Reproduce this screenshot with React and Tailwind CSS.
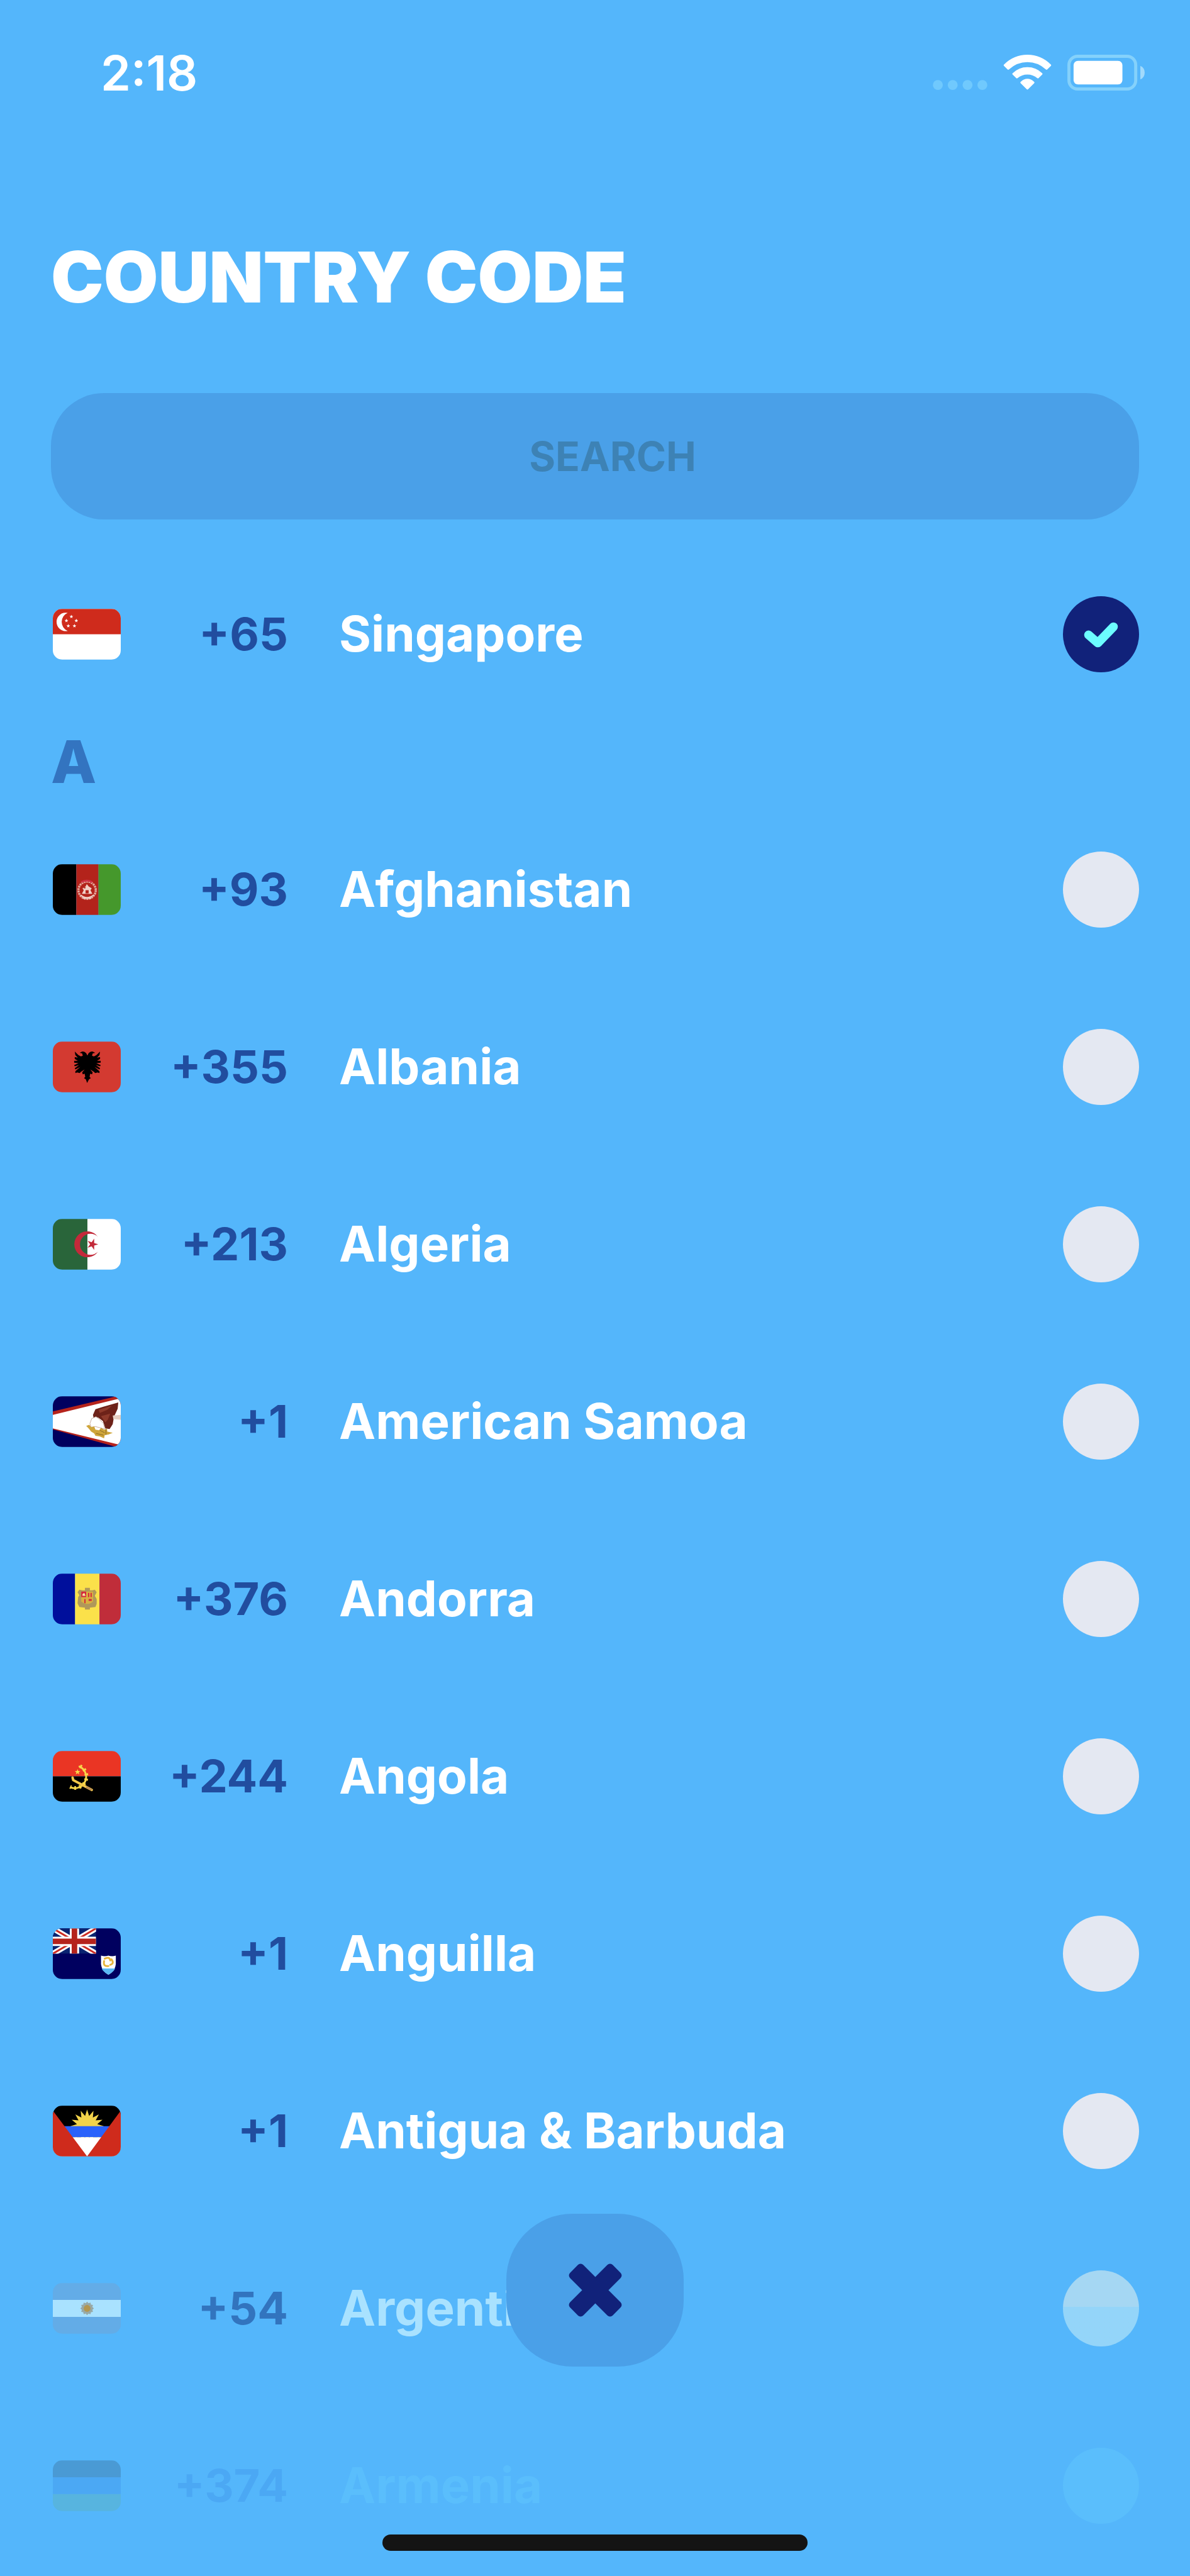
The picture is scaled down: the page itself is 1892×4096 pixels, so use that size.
import React, { useState } from "react";

const starPoints = (cx, cy, r, inner = 0.42, spikes = 5, turn = -90) =>
  Array.from({ length: spikes * 2 }, (_, i) => {
    const radius = i % 2 ? r * inner : r;
    const a = ((turn + (i * 180) / spikes) * Math.PI) / 180;
    return `${(cx + radius * Math.cos(a)).toFixed(2)},${(cy + radius * Math.sin(a)).toFixed(2)}`;
  }).join(" ");

const Star = ({ cx, cy, r, inner, spikes, turn, fill }) => (
  <polygon points={starPoints(cx, cy, r, inner, spikes, turn)} fill={fill} />
);

// All flags share a 110 x 82 canvas
const flags = {
  sg: (
    <>
      <path fill="#fff" d="M0 0h110v82H0z" />
      <path fill="#cf2b1c" d="M0 0h110v41H0z" />
      <path fill="#fff" d="M24 6.300A15 15 0 1 0 24 35.700A16 16 0 0 1 24 6.300z" />
      <Star cx={30} cy={12.5} r={3.2} fill="#fff" />
      <Star cx={22} cy={19} r={3.2} fill="#fff" />
      <Star cx={38} cy={19} r={3.2} fill="#fff" />
      <Star cx={25} cy={27.5} r={3.2} fill="#fff" />
      <Star cx={35} cy={27.5} r={3.2} fill="#fff" />
    </>
  ),
  af: (
    <>
      <path fill="#000" d="M0 0h38v82H0z" />
      <path fill="#b3231b" d="M38 0h36v82H38z" />
      <path fill="#45982c" d="M74 0h36v82H74z" />
      <circle cx="55.500" cy="42" r="14" fill="none" stroke="#e3a79c" strokeWidth="3.500" strokeDasharray="3 1" />
      <path d="M46 29q9-5 18 0" stroke="#cf3246" strokeWidth="3" fill="none" />
      <path fill="#f0cfc6" d="M55 32l3 4 5 3-2 3 3 6H47l3-6-2-3 5-3z" />
      <path fill="#b3231b" d="M53 42h5v5h-5zM50 37h3v2h-3z" />
      <path d="M45 50q10 8 21 0M49 55h13" stroke="#f0cfc6" strokeWidth="2" fill="none" />
    </>
  ),
  al: (
    <>
      <path fill="#d33a31" d="M0 0h110v82H0z" />
      <path
        fill="#000"
        d="M55.500 22c-1-4-4-6-8-6l-4 2 4 1 1 4-3 1-4-2-6-6 1 6 4 4-5-1v3l5 3h-6v3l7 1-7 3 1 2 7-2-7 5 1 2 8-4-8 7v3l3-1 4 1 2-2 6-4-4 5 1 3 3-1 1 5-2 2 3 2 2 6 3-6 3-2-2-2 1-5 3 1 1-3-4-5 6 4 2 2 4-1 3 1v-3l-8-7 8 4 1-2-7-5 7 2 1-2-7-3 7-1v-3h-6l5-3v-3l-5 1 4-4 1-6-6 6-4 2-3-1 1-4 4-1-4-2c-4 0-7 2-8 6z"
      />
    </>
  ),
  dz: (
    <>
      <path fill="#29653a" d="M0 0h56v82H0z" />
      <path fill="#fff" d="M56 0h54v82H56z" />
      <path fill="#c32a3a" d="M73 29A21 21 0 1 0 73 53A17 17 0 1 1 73 29z" />
      <Star cx={64} cy={41} r={9.5} inner={0.38} turn={-72} fill="#c32a3a" />
    </>
  ),
  as: (
    <>
      <path fill="#00005f" d="M0 0h110v82H0z" />
      <path fill="#b5231c" d="M0 24.500L103 0h7v82h-7L0 53.500z" />
      <path fill="#fff" d="M0 30L110 3v76L0 52z" />
      <path fill="#6d2219" d="M65 30l4-9 12-4 25-7-1 10-6 13-2 12-5 8-7-1-4-12-8-6-7 1z" />
      <path fill="#8f3a2b" d="M74 22l22-7-8 7-12 5zM78 32l15-4-4 10-4 4z" />
      <path fill="#e6cfc2" d="M97 31l13-1v8l-12-1z" />
      <path fill="#fff" stroke="#c9ab9d" strokeWidth="1" d="M60 44l3-8 7-3 5 4 7 7 2 9-7-2-8-2-7 1z" />
      <path
        fill="#cfa53a"
        d="M54 48l5-2 3 4 5-1 2 5 6 1 3-4 5 3 5-1v4l9 2-7 3-6 1-1 5-7-3-7-1-2-4-5-3-4-5z"
      />
      <path stroke="#8a6a24" strokeWidth="1" fill="none" d="M70 60l12 3M76 55l8 4M86 52v10" />
    </>
  ),
  ad: (
    <>
      <path fill="#000f9c" d="M0 0h36v82H0z" />
      <path fill="#fbe14a" d="M36 0h39.500v82H36z" />
      <path fill="#c02d3a" d="M75.500 0H110v82H75.500z" />
      <path
        fill="#b0985a"
        d="M52 23h8v4h4l4-1 3 4-3 6 3 5v8l-2 5-9 1v3h-8v-3l-9-1-3-6 1-10 2-3-3-5 3-4 5 1 4 0z"
      />
      <path fill="#d9b040" d="M46 29h19v16q-9 8-19 0z" />
      <path fill="#d5283c" d="M46 29h8v9h-8zM57 31h2v7h-2zM61 31h2v7h-2zM51 41h2v7h-2zM58 41h5v3h-5z" />
      <path fill="#f7e6a0" d="M48 33l3-2 2 5h-5z" />
    </>
  ),
  ao: (
    <>
      <path fill="#ea3524" d="M0 0h110v41H0z" />
      <path fill="#000" d="M0 41h110v41H0z" />
      <path d="M42 24.500A18 18 0 0 1 29 59" stroke="#f8d84a" strokeWidth="3" fill="none" />
      <path
        d="M44 24.500A18 18 0 0 1 28 58"
        stroke="#f8d84a"
        strokeWidth="6"
        strokeDasharray="3 5"
        fill="none"
      />
      <path d="M32 43l1 4 30 16" stroke="#f3c94a" strokeWidth="4" fill="none" strokeLinecap="round" />
      <path d="M54 58l9 5" stroke="#b98a55" strokeWidth="3" />
      <Star cx={40} cy={34} r={4.8} fill="#f8d84a" />
    </>
  ),
  ai: (
    <>
      <path fill="#00005f" d="M0 0h110v82H0z" />
      <svg width="70" height="41" viewBox="0 0 70 41">
        <path fill="#0a2370" d="M0 0h70v41H0z" />
        <path stroke="#fff" strokeWidth="9" d="M0 0l70 41M70 0L0 41" />
        <path stroke="#cc2b22" strokeWidth="3" d="M0 0l70 41M70 0L0 41" />
        <path stroke="#fff" strokeWidth="15" d="M35 0v41M0 21h70" />
        <path stroke="#b5231c" strokeWidth="9" d="M35 0v41M0 21h70" />
      </svg>
      <path fill="#fff" d="M78 44q6 2 12 0 6 2 12 0v14q-1 11-12 17-11-6-12-17z" />
      <path fill="#5bb8f5" d="M79 65h22q-3 6-11 10-8-4-11-10z" />
      <path
        d="M84 49q8-4 9 3M95 50q5 7-2 9M90 61q-9 1-7-8"
        stroke="#e8b53c"
        strokeWidth="3"
        fill="none"
        strokeLinecap="round"
      />
    </>
  ),
  ag: (
    <>
      <path fill="#000" d="M0 0h110v82H0z" />
      <Star cx={55.5} cy={33} r={27} inner={0.62} spikes={16} turn={-90} fill="#f2d34a" />
      <path fill="#2a62fb" d="M0 33h110v18H0z" />
      <path fill="#fff" d="M0 51h110v31H0z" />
      <path fill="#cf2b1c" d="M0 8l55.500 74H0zM110 8L55.500 82H110z" />
    </>
  ),
  ar: (
    <>
      <path fill="#63ace7" d="M0 0h110v82H0z" />
      <path fill="#a9e2ff" d="M0 27.300h110v27.400H0z" />
      <Star cx={55.5} cy={41} r={11} inner={0.8} spikes={12} fill="#98a9a6" />
      <circle cx="55.500" cy="41" r="5.500" fill="#b3964f" />
    </>
  ),
  am: (
    <>
      <path fill="#4a9ad4" d="M0 0h110v27.500H0z" />
      <path fill="#4ba8f4" d="M0 27.300h110v27.500H0z" />
      <path fill="#57b4df" d="M0 54.600h110V82H0z" />
    </>
  ),
};

const countries = [
  { id: "af", code: "+93", name: "Afghanistan" },
  { id: "al", code: "+355", name: "Albania" },
  { id: "dz", code: "+213", name: "Algeria" },
  { id: "as", code: "+1", name: "American Samoa" },
  { id: "ad", code: "+376", name: "Andorra" },
  { id: "ao", code: "+244", name: "Angola" },
  { id: "ai", code: "+1", name: "Anguilla" },
  { id: "ag", code: "+1", name: "Antigua & Barbuda" },
  { id: "ar", code: "+54", name: "Argentina", tone: "fading" },
  { id: "am", code: "+374", name: "Armenia", tone: "faded" },
];

const tones = {
  solid: { code: "text-[#214d9f]", name: "text-white", radio: "bg-[#e4e8f2]" },
  fading: {
    code: "text-[#3274be]",
    name: "text-[#a9e2ff]",
    radio: "bg-linear-to-b from-[#a5d7f3] from-48% to-[#94d5f9] to-48%",
  },
  faded: { code: "text-[#4ba8f4]", name: "text-[#5abefc]", radio: "bg-[#5abefc]" },
};

const Flag = ({ id }) => (
  <svg viewBox="0 0 110 82" className="w-[108px] h-[81px] rounded-[15px] shrink-0" aria-hidden="true">
    {flags[id]}
  </svg>
);

const CountryRow = ({ country, selected, onSelect }) => {
  const tone = tones[country.tone || "solid"];

  return (
    <label className="flex items-center h-[282px] pl-[3px] cursor-pointer">
      <Flag id={country.id} />
      <span className={`w-[266px] text-right text-[72px] leading-none font-bold ${tone.code}`}>
        {country.code}
      </span>
      <span className={`flex-1 pl-[81px] text-[78px] leading-none font-bold whitespace-nowrap ${tone.name}`}>
        {country.name}
      </span>
      <span className="relative size-[121px] shrink-0">
        <input
          type="radio"
          name="country"
          value={country.id}
          checked={selected}
          onChange={() => onSelect(country.id)}
          className={`block appearance-none size-[121px] rounded-full checked:bg-[#11227a] ${tone.radio}`}
        />
        {selected && (
          <svg viewBox="0 0 122 122" className="absolute inset-0 size-full pointer-events-none" aria-hidden="true">
            <path
              d="M41 62l15 13 25-26"
              fill="none"
              stroke="#6cfdff"
              strokeWidth="14"
              strokeLinecap="round"
              strokeLinejoin="round"
            />
          </svg>
        )}
      </span>
    </label>
  );
};

const StatusBar = () => (
  <div className="flex items-center justify-between h-[232px] pl-[160px] pr-[72px]">
    <span className="text-[77px] leading-none font-semibold text-white">2:18</span>
    <div className="flex items-center gap-[25px]">
      {/* No signal */}
      <svg viewBox="0 0 88 59" className="w-[87px] h-[58px]" fill="#70c9fd">
        <circle cx="8" cy="49" r="8" />
        <circle cx="32" cy="49" r="8" />
        <circle cx="56" cy="49" r="8" />
        <circle cx="80" cy="49" r="8" />
      </svg>
      {/* Wi-Fi */}
      <svg viewBox="0 0 78 59" className="w-[77px] h-[58px]" fill="#fff">
        <path d="M1 16Q17 0 39 0t38 16q1 1 0 2l-6 6q-1 1-2 0Q56 12 39 12T9 24q-1 1-2 0l-6-6q-1-1 0-2z" />
        <path d="M15 30q10-10 24-10t24 10q1 1 0 2l-6 6q-1 1-2 0-7-6-16-6t-16 6q-1 1-2 0l-6-6q-1-1 0-2z" />
        <path d="M28 44q5-5 11-5t11 5q1 1 0 2L40 56q-1 1-2 0L28 46q-1-1 0-2z" />
      </svg>
      {/* Battery */}
      <svg viewBox="0 0 125 59" className="w-[123px] h-[58px]">
        <rect x="2.500" y="2.500" width="108" height="53" rx="14" fill="none" stroke="#84d1fb" strokeWidth="5" />
        <rect x="10" y="10" width="79" height="38" rx="7" fill="#fff" />
        <path d="M118 18q7 3 7 11t-7 11z" fill="#a2dafb" />
      </svg>
    </div>
  </div>
);

export default function App() {
  const [selected, setSelected] = useState("sg");

  return (
    <div className="relative min-h-screen overflow-hidden bg-[#54b6fb] font-[Inter,'Liberation_Sans',sans-serif]">
      <StatusBar />

      <main className="px-[81px]">
        <h1 className="pt-[138px] text-[112px] leading-[140px] font-black text-white whitespace-nowrap">
          COUNTRY CODE
        </h1>

        <input
          type="text"
          aria-label="Search countries"
          placeholder="SEARCH"
          className="block w-full h-[201px] mt-[115px] pl-[56px] rounded-[84px] bg-[#4aa0e8] text-center text-[64px] font-bold text-white outline-none placeholder:text-[#3d82b5] placeholder:opacity-100"
        />

        <div className="mt-[41px]">
          <CountryRow
            country={{ id: "sg", code: "+65", name: "Singapore" }}
            selected={selected === "sg"}
            onSelect={setSelected}
          />

          <h2 className="h-[124px] text-[94px] leading-[124px] font-extrabold text-[#3374c0]">A</h2>

          {countries.map((country) => (
            <CountryRow
              key={country.id}
              country={country}
              selected={selected === country.id}
              onSelect={setSelected}
            />
          ))}
        </div>
      </main>

      {/* Floating close button */}
      <button
        type="button"
        aria-label="Close"
        className="absolute bottom-[333px] left-1/2 -translate-x-1/2 flex items-center justify-center w-[282px] h-[243px] rounded-[105px] bg-[#4aa0e8]"
      >
        <svg viewBox="-43 -43 86 86" className="size-[85px]" fill="#11227a" aria-hidden="true">
          <rect x="-48.500" y="-15" width="97" height="30" rx="6" transform="rotate(45)" />
          <rect x="-48.500" y="-15" width="97" height="30" rx="6" transform="rotate(-45)" />
        </svg>
      </button>

      {/* Home indicator */}
      <div className="absolute bottom-[40px] left-1/2 -translate-x-1/2 w-[676px] h-[26px] rounded-full bg-[#141414]"></div>
    </div>
  );
}
